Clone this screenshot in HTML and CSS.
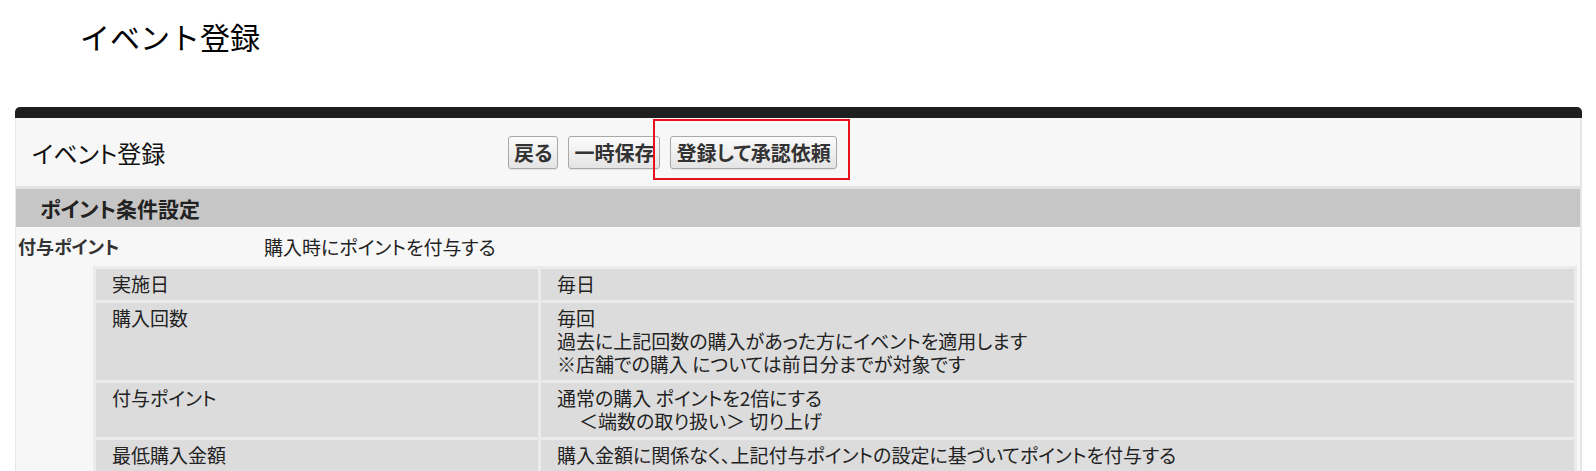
FILE: index.html
```html
<!DOCTYPE html>
<html lang="ja">
<head>
    <meta charset="UTF-8">
    <meta name="viewport" content="width=device-width, initial-scale=1.0">
    <title>イベント登録</title>
    <link rel="stylesheet" href="styles.css">
</head>
<body>

    <h1 class="page-title">イベント登録</h1>

    <div class="panel">
        <div class="panel-bar"></div>
        <div class="panel-body">
            <div class="panel-header">
                <h2 class="panel-title">イベント登録</h2>
                <div class="actions">
                    <button class="btn">戻る</button>
                    <button class="btn">一時保存</button>
                    <span class="callout"><button class="btn">登録して承認依頼</button></span>
                </div>
            </div>

            <h3 class="section-head">ポイント条件設定</h3>

            <div class="point-row">
                <div class="point-label">付与ポイント</div>
                <div class="point-value">購入時にポイントを付与する</div>
            </div>

            <div class="detail-table">
                <div class="cell">実施日</div>
                <div class="cell">毎日</div>

                <div class="cell">購入回数</div>
                <div class="cell">
                    毎回<br>
                    過去に上記回数の購入があった方にイベントを適用します<br>
                    ※店舗での購入 については前日分までが対象です
                </div>

                <div class="cell">付与ポイント</div>
                <div class="cell">
                    通常の購入 ポイントを2倍にする<br>
                    <span class="indent">＜端数の取り扱い＞ 切り上げ</span>
                </div>

                <div class="cell">最低購入金額</div>
                <div class="cell">購入金額に関係なく、上記付与ポイントの設定に基づいてポイントを付与する</div>
            </div>
        </div>
    </div>

</body>
</html>
```

FILE: styles.css
```css
body {
    margin: 0;
    background: #fff;
    color: #222;
    font-family: "Noto Sans CJK JP", "Noto Sans", sans-serif;
    font-feature-settings: "palt";
}

.page-title {
    margin: 0 0 51px;
    padding: 16px 0 0 80px;
    font-size: 30px;
    font-weight: normal;
    line-height: 40px;
    color: #000;
    font-feature-settings: normal;
}

.panel {
    margin: 0 14px 0 15px;
}

.panel-bar {
    height: 11px;
    background: #1f1f1f;
    border-radius: 5px 5px 0 0;
}

.panel-body {
    background: #f7f7f7;
    border-left: 1px solid #e6e6e6;
    border-right: 2px solid #e6e6e6;
    padding-bottom: 40px;
}

.panel-header {
    display: flex;
    align-items: center;
    height: 68px;
    padding-left: 16px;
    border-bottom: 3px solid #e3e3e3;
}

.panel-title {
    margin: 0;
    width: 476px;
    font-size: 24px;
    font-weight: normal;
    color: #111;
}

.actions {
    display: flex;
    gap: 10px;
}

.btn {
    height: 33px;
    padding: 0 5px;
    font-family: inherit;
    font-feature-settings: "palt";
    font-size: 20px;
    font-weight: bold;
    color: #333;
    background: linear-gradient(#fbfbfb, #e4e4e4);
    border: 1px solid #a9a9a9;
    border-radius: 3px;
    box-shadow: 0 1px 1px rgba(0, 0, 0, 0.08);
}

.callout {
    position: relative;
    display: inline-block;
}

.callout::after {
    content: "";
    position: absolute;
    top: -17px;
    bottom: -11px;
    left: -17px;
    right: -13px;
    border: 2px solid #e8111b;
}

.section-head {
    margin: 0;
    height: 38px;
    line-height: 38px;
    padding-left: 24px;
    background: #c6c6c6;
    font-size: 21px;
    color: #222;
}

.point-row {
    display: flex;
    align-items: center;
    height: 38px;
}

.point-label {
    width: 246px;
    padding-left: 2px;
    font-size: 18px;
    font-weight: bold;
    color: #333;
}

.point-value {
    font-size: 19px;
}

.detail-table {
    display: grid;
    grid-template-columns: 442px 1fr;
    gap: 3px;
    margin: 1px 3px 0 77px;
    padding: 3px;
    background: #ebebeb;
}

.cell {
    background: #dcdcdc;
    padding: 3px 16px 5px;
    font-size: 19px;
    line-height: 23px;
    color: #222;
}

.indent {
    padding-left: 22px;
}
```
